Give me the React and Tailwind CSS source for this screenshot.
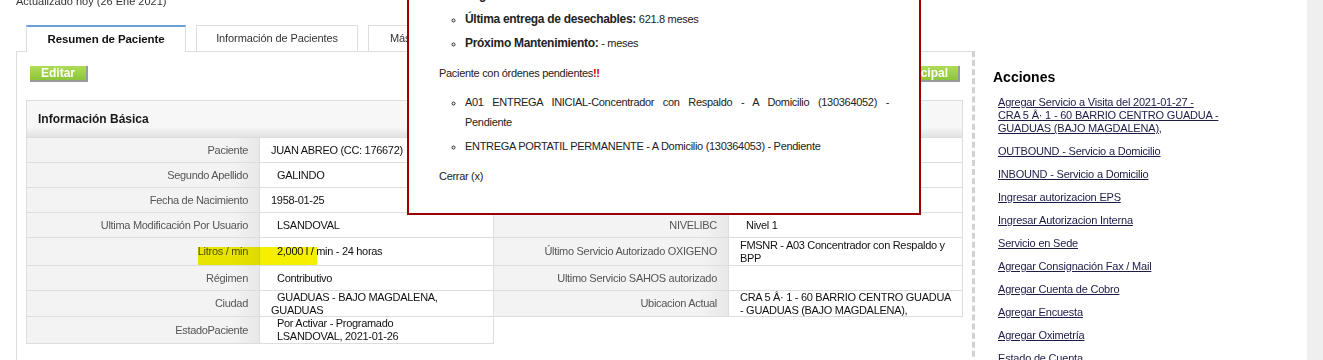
import React from "react";

const leftRows = [
  { label: "Paciente", lines: ["JUAN ABREO (CC: 176672)"] },
  { label: "Segundo Apellido", lines: ["GALINDO"], indent: true },
  { label: "Fecha de Nacimiento", lines: ["1958-01-25"] },
  { label: "Ultima Modificación Por Usuario", lines: ["LSANDOVAL"], indent: true },
  { label: "Litros / min", lines: ["2,000 l / min - 24 horas"], indent: true },
  { label: "Régimen", lines: ["Contributivo"], indent: true },
  { label: "Ciudad", lines: ["GUADUAS - BAJO MAGDALENA,", "GUADUAS"], indent: true },
  { label: "EstadoPaciente", lines: ["Por Activar - Programado", "LSANDOVAL, 2021-01-26"], indentAll: true },
];

// first three rows of the right table sit under the popup
const rightRows = [
  { label: "", lines: [] },
  { label: "", lines: [] },
  { label: "", lines: [] },
  { label: "NIVELIBC", lines: ["Nivel 1"], indent: true },
  { label: "Último Servicio Autorizado OXIGENO", lines: ["FMSNR - A03 Concentrador con Respaldo y", "BPP"] },
  { label: "Ultimo Servicio SAHOS autorizado", lines: [] },
  { label: "Ubicacion Actual", lines: ["CRA 5 Â· 1 - 60 BARRIO CENTRO GUADUA", "- GUADUAS (BAJO MAGDALENA),"] },
  null,
];

const acciones = [
  "OUTBOUND - Servicio a Domicilio",
  "INBOUND - Servicio a Domicilio",
  "Ingresar autorizacion EPS",
  "Ingresar Autorizacion Interna",
  "Servicio en Sede",
  "Agregar Consignación Fax / Mail",
  "Agregar Cuenta de Cobro",
  "Agregar Encuesta",
  "Agregar Oximetría",
  "Estado de Cuenta",
];

const LabelCell = ({ text, first }) => (
  <div
    className={`flex items-center justify-end border-b border-r border-[#ddd] bg-[linear-gradient(to_right,#f3f3f3_88%,#e8e8e8)] pr-[11px] text-right leading-[13px] text-[#555] ${
      first ? "border-l" : ""
    }`}
  >
    {text}
  </div>
);

const ValueCell = ({ row }) => (
  <div className="flex items-center border-b border-r border-[#ddd] bg-white pl-[11px] pr-[2px] leading-[13px] text-[#111]">
    <div className={`whitespace-nowrap ${row.indent ? "indent-[6px]" : ""} ${row.indentAll ? "pl-[6px]" : ""}`}>
      {row.lines.map((l, i) => (
        <React.Fragment key={i}>
          {i > 0 && <br />}
          {l}
        </React.Fragment>
      ))}
    </div>
  </div>
);

function Tabs() {
  return (
    <div className="relative z-10 -mb-px mt-[17px] flex items-end gap-[10px] pl-[26px] tracking-[-0.1px]">
      <div className="flex h-[27px] w-[160px] items-center justify-center border-x border-t-2 border-x-[#ddd] border-t-[#6c9fd6] bg-white text-[11.5px] font-bold text-[#111]">
        Resumen de Paciente
      </div>
      <div className="flex h-[27px] w-[162px] items-center justify-center border border-[#ddd] bg-white text-[#333]">
        Información de Pacientes
      </div>
      <div className="flex h-[27px] items-center border border-[#ddd] bg-white px-[21px] text-[#333]">
        Más Información
      </div>
    </div>
  );
}

function Panel() {
  return (
    <div className="ml-[16px] w-[956px] shrink-0 border-l border-t border-[#ddd] pt-[14px]">
      <div className="flex items-start justify-between pl-[13px] pr-[12px]">
        <button className="border-b-2 border-r-2 border-[#9a9a9a] bg-[linear-gradient(#b0dc58,#8cc43a)] px-[11px] text-[12px] font-bold leading-[14px] text-white">
          Editar
        </button>
        <button className="border-b-2 border-r-2 border-[#9a9a9a] bg-[linear-gradient(#b0dc58,#8cc43a)] px-[10px] text-[12px] font-bold leading-[14px] text-white">
          Página Principal
        </button>
      </div>

      <div className="mx-[9px] mt-[18px]">
        <div className="flex h-[38px] items-center border border-[#ddd] bg-[linear-gradient(#f7f7f7_72%,#e2e2e2)] pl-[11px] text-[12px] font-bold text-[#1a1a1a]">
          Información Básica
        </div>
        <div className="relative grid grid-cols-[234px_234px_235px_234px] grid-rows-[25px_25px_25px_25px_28px_25px_26px_27px] tracking-[-0.3px]">
          {leftRows.map((row, i) => (
            <React.Fragment key={i}>
              <LabelCell text={row.label} first />
              <ValueCell row={row} />
              {rightRows[i] ? (
                <>
                  <LabelCell text={rightRows[i].label} />
                  <ValueCell row={rightRows[i]} />
                </>
              ) : (
                <>
                  <div />
                  <div />
                </>
              )}
            </React.Fragment>
          ))}
          <div className="absolute left-[172px] top-[109px] h-[18px] w-[119px] bg-[#f4f000] mix-blend-multiply" />
        </div>
      </div>
    </div>
  );
}

function Sidebar() {
  return (
    <div className="flex-1 border-l-[3px] border-dashed border-[#d2d2d2] pl-[18px] pt-[18px]">
      <h3 className="text-[14px] font-bold leading-[17px] text-black">Acciones</h3>
      <ul className="mt-[10px] pl-[5px] leading-[13px] tracking-[-0.2px] text-[#1c1c48]">
        <li className="mb-[10px]">
          <a href="#" className="underline">
            Agregar Servicio a Visita del 2021-01-27 -<br />
            CRA 5 Â· 1 - 60 BARRIO CENTRO GUADUA -<br />
            GUADUAS (BAJO MAGDALENA)
          </a>
          ,
        </li>
        {acciones.map((a) => (
          <li key={a} className="mb-[10px]">
            <a href="#" className="underline">
              {a}
            </a>
          </li>
        ))}
      </ul>
    </div>
  );
}

function Modal() {
  return (
    <div className="absolute left-[407px] top-[-40px] z-20 w-[514px] border-2 border-[#990000] bg-white px-[30px] pb-[27px] pt-[23px] text-[11px] tracking-[-0.3px] text-[#222]">
      <ul className="mb-[10px] list-[circle] pl-[26px]">
        <li className="mb-[4px] leading-[20px]">
          <b className="text-[12px]">Seguimiento:</b> - meses
        </li>
        <li className="mb-[4px] leading-[20px]">
          <b className="text-[12px]">Última entrega de desechables:</b> 621.8 meses
        </li>
        <li className="mb-[4px] leading-[20px]">
          <b className="text-[12px]">Próximo Mantenimiento:</b> - meses
        </li>
      </ul>
      <p className="leading-[20px]">
        Paciente con órdenes pendientes<span className="font-bold text-[#cc0000]">!!</span>
      </p>
      <ul className="mt-[9px] list-[circle] pl-[26px]">
        <li className="mb-[4px] leading-[20px]">
          <span className="block text-justify [text-align-last:justify]">
            A01 ENTREGA INICIAL-Concentrador con Respaldo - A Domicilio (130364052) -
          </span>
          Pendiente
        </li>
        <li className="mb-[4px] leading-[20px]">
          ENTREGA PORTATIL PERMANENTE - A Domicilio (130364053) - Pendiente
        </li>
      </ul>
      <p className="mt-[10px] leading-[20px]">Cerrar (x)</p>
    </div>
  );
}

export default function App() {
  return (
    <div className="relative flex h-[360px] overflow-hidden bg-white font-['Liberation_Sans',Arial,sans-serif] text-[11px] text-[#222]">
      <div className="min-w-0 flex-1">
        <p className="-mt-[5px] pl-[16px] leading-[13px] text-[#333]">Actualizado hoy (26 Ene 2021)</p>
        <Tabs />
        <div className="flex">
          <Panel />
          <Sidebar />
        </div>
      </div>
      <div className="w-[16px] shrink-0 bg-[#efefef]" />
      <Modal />
    </div>
  );
}
